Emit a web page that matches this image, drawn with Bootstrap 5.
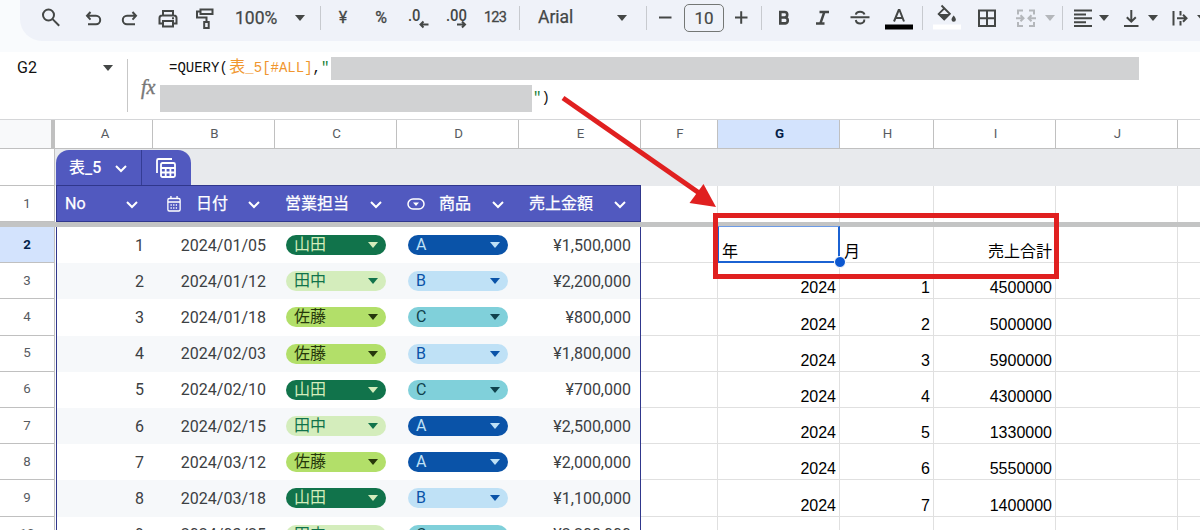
<!DOCTYPE html>
<html lang="ja">
<head>
<meta charset="utf-8">
<title>QUERY</title>
<link rel="stylesheet" href="https://cdn.jsdelivr.net/npm/bootstrap@5.3.0/dist/css/bootstrap.min.css">
<style>
body{width:1200px;height:530px;overflow:hidden;background:#fff;font-family:Roboto,"Noto Sans CJK JP",sans-serif;font-size:16px;line-height:20px;color:#3c4043}
.topzone{height:52px;background:#f9fbfd}
.tools{height:41px;margin-left:20px;padding-bottom:6px;background:#eff2f9;border-radius:0 0 0 22px;color:#444746;font-weight:400;white-space:nowrap;overflow:hidden}
.tools>*{flex:none}
svg{display:block;overflow:visible}
.ic{width:24px;height:24px;fill:none;stroke:#444746;stroke-width:2}
.wide{width:28px}
.car{width:0;height:0;border:5px solid transparent;border-top:6px solid #444746;border-bottom:0}
.car.off{border-top-color:#b4b7bb}
.vr1{width:1px;height:24px;background:#c7cacf}
.m5{margin-left:5px}.m7{margin-left:7px}.m9{margin-left:9px}.m10{margin-left:10px}.m13{margin-left:13px}.m14{margin-left:14px}.m15{margin-left:15px}.m18{margin-left:18px}.m39{margin-left:39px}
.t17{font-size:17.5px;-webkit-text-stroke:.25px}
.sym{width:24px;text-align:center;-webkit-text-stroke:.3px}
.n123{width:26px;margin-left:11px;font-size:14.5px;letter-spacing:-.8px;text-align:center;-webkit-text-stroke:.3px}
.size{width:40px;height:28px;border:1px solid #747775;border-radius:5px;line-height:26px;font-size:17px;-webkit-text-stroke:.2px}
.fbar{height:67px;color:#111}
.namebox{width:128px;height:53px;margin-top:7px;padding:0 14px 0 17px;border-right:1px solid #c7c7c7}
.fx{width:32px;padding:24px 0 0 13px;font:italic 20px "Liberation Serif",serif;color:#777;-webkit-text-stroke:.4px}
.code{font:14px/22px "Liberation Mono","Noto Sans CJK JP",monospace;white-space:nowrap}
.code .jp{font-size:16px;line-height:20px}
.orange{color:#f0962e}.green{color:#188038}
.mask{background:#d1d2d3}
.gridrow{display:grid;grid-template-columns:56px 97px 122px 122px 122px 122px 77px 122px 94px 122px 122px 22px}
.heads{height:30px;border-top:1px solid #d5d6d8;border-bottom:1px solid #c0c0c0;font-size:13.3px;color:#575b5f;text-align:center;line-height:28px}
.heads>div{border-right:1px solid #c0c0c0;padding-left:2px}
.heads>.corner{background:#f8f9fa;border-right:4px solid #c0c0c0;width:55px}
.on{background:#d3e3fd;color:#041e49!important;font-weight:700}
.rh{width:55px;border-right:1px solid #c0c0c0;border-bottom:1px solid #c0c0c0;font-size:13.3px;color:#575b5f}
.tabrow{height:37px;background:#e8eaed}
.tabrow .rh{background:#fff;margin-right:1px}
.tabs{width:135px;height:36px;margin-top:1px;background:#5159bf;border-radius:13px 13px 0 0;color:#fff;font-weight:500}
.tabs .nm{width:86px;padding-left:13px;border-right:1px solid #343c94;height:36px}
.r1{height:36px}
.thead1{grid-column:2/7;display:grid;grid-template-columns:97px 122px 122px 122px 122px;background:#5159bf;border:1px solid #30378c;color:#fff;margin-top:-1px;-webkit-text-stroke:.25px}
.thead1>div{padding:0 16px 0 9px;padding-top:1px}
.thead1>div:first-child{padding-left:8px}
.freeze{height:5px;background:#c3c4c4}
.chev{width:12px;height:7px;fill:none;stroke:#fff;stroke-width:2}
.drow{height:36.2px}
.drow>.c{border-bottom:1px solid #e0e0e0;border-right:1px solid #e0e0e0;font:16px/20px "Liberation Sans","Noto Sans CJK JP",sans-serif;color:#000;padding:0 3px 0 4px}
.r1>.c{border-right:1px solid #e0e0e0}
.tb{padding:1px 9px 0 0}
.alt{background:#f6f8fa}
.edgeL{border-left:1px solid #30378c}
.edgeR{border-right:1px solid #30378c}
.chip{width:100px;height:20px;border-radius:10px;padding:0 8px}
.chip::after{content:"";border:5.5px solid transparent;border-top:6px solid;border-bottom:0}
.chip.dg{background:#11734b;color:#d4edbc}.chip.lg{background:#d4edbc;color:#11734b}.chip.yg{background:#b2df69;color:#26370b}
.chip.db{background:#0a53a8;color:#bfe1f6}.chip.lb{background:#bfe1f6;color:#0a53a8}.chip.tl{background:#80d0da;color:#10424d}
.pick{left:717px;top:226px;width:123px;height:37px;border:2px solid #1b62d2;border-top:1px solid #6d9be5}
.dot{left:834px;top:256px;width:12px;height:12px;border-radius:50%;background:#0b57d0;border:1px solid #fff}
.mark1{left:713px;top:213px;width:346px;height:66px;border:5px solid #e02020}
</style>
</head>
<body class="position-relative">
<div class="topzone">
 <div class="tools d-flex align-items-center">
  <svg class="ic" style="margin-left:19px" viewBox="0 0 24 24"><circle cx="9.500" cy="9" r="5.500"/><path d="M13.600 13.100l6.600 6.600"/></svg>
  <svg class="ic m18" viewBox="0 0 24 24"><path d="M9.500 5L6 8.800l3.500 3.800M6.200 8.800H15a4.200 4.200 0 010 8.400H7" transform="translate(0 1)"/></svg>
  <svg class="ic m13" viewBox="0 0 24 24"><path d="M14.500 5L18 8.800l-3.500 3.800M17.800 8.800H9a4.200 4.200 0 000 8.400h8" transform="translate(0 1)"/></svg>
  <svg class="ic m14" viewBox="0 0 24 24"><path d="M7 9V5h10v4M7 17.500H3.500V12A2.500 2.500 0 016 9.500h12a2.500 2.500 0 012.500 2.500v5.500H17M7 15h10v5.500H7z"/><path d="M16 12.300h2"/></svg>
  <svg class="ic m13" viewBox="0 0 24 24"><path d="M7.500 3.500h12V8h-12zM7.500 5.500H4v6h9.500v4M11.200 16h4.500v6h-4.500z"/></svg>
  <span class="m18 t17" style="width:46px">100%</span>
  <i class="car m14"></i><i class="vr1 m15"></i>
  <span class="m10 sym">¥</span>
  <span class="m14 sym">%</span>
  <svg class="ic m13" viewBox="0 0 24 24"><text x="2" y="15" font-size="16" fill="#444746" stroke="none" font-weight="500" textLength="12.500" lengthAdjust="spacingAndGlyphs">.0</text><path d="M22.500 18.500h-8m3-3l-3 3 3 3"/></svg>
  <svg class="ic wide m13" viewBox="0 0 28 24"><text x="3" y="15" font-size="16" fill="#444746" stroke="none" font-weight="500" textLength="21" lengthAdjust="spacingAndGlyphs">.00</text><path d="M14 18.500h8m-3-3l3 3-3 3"/></svg>
  <span class="n123">123</span>
  <i class="vr1" style="margin-left:11px"></i>
  <span class="m18 t17" style="width:40px;margin-top:-2px">Arial</span>
  <i class="car m39"></i><i class="vr1" style="margin-left:19px"></i>
  <svg class="ic" style="margin-left:6px" viewBox="0 0 24 24"><path d="M6 11.500h12.500"/></svg>
  <div class="size m7 text-center">10</div>
  <svg class="ic m5" viewBox="0 0 24 24"><path d="M6 11.500h12.500M12.200 5.300v12.500"/></svg>
  <i class="vr1" style="margin-left:8px"></i>
  <svg class="ic m10" viewBox="0 0 24 24"><path stroke-width="2.600" d="M8.300 6h4.200a2.700 2.700 0 010 5.500H8.300zM8.300 11.500h5a3 3 0 010 5.900h-5z"/></svg>
  <svg class="ic m14" viewBox="0 0 24 24"><path stroke-width="2.500" d="M9.500 6H19M6 17.400h8.500M14.300 6.200l-3.800 11"/></svg>
  <svg class="ic m14" viewBox="0 0 24 24"><path d="M2.500 11.200h19M16.500 8.600C15.500 4.800 8.500 4.800 7.800 8.600M7.800 14c.8 5 8.900 4.500 8.500-.5"/></svg>
  <svg class="ic wide m13" viewBox="0 0 28 24"><path d="M9 15.500L13.700 4h.8L19 15.500M10.600 12h7"/><path fill="#000" stroke="none" d="M0 18.500h28v5H0z"/></svg>
  <i class="vr1 m9"></i>
  <svg class="ic wide m10" viewBox="0 0 28 24"><path stroke-width="1.900" d="M8.500 -.5l8.300 8.300-5.600 5.600-5.500-5.500 5.600-5.600"/><path fill="#444746" stroke="none" d="M5 8h12.500l-6.300 6.300zM20.700 9.500s-2.200 2.500-2.200 4a2.200 2.200 0 004.400 0c0-1.500-2.200-4-2.200-4z"/><path fill="#fff" stroke="none" d="M0 18.500h28v5H0z"/></svg>
  <svg class="ic m14" viewBox="0 0 24 24"><path d="M4 4.500h16v15.500H4zM12 4.500V20M4 12.200h16"/></svg>
  <svg class="ic m15" viewBox="0 0 24 24" style="stroke:#b4b7bb"><path d="M9 4.500H4v4M9 20H4v-4M15 4.500h5v4M15 20h5v-4M2 12.200h7.500m-3-3l3 3-3 3M22 12.200h-7.500m3-3l-3 3 3 3"/></svg>
  <i class="car off m7"></i><i class="vr1 m7"></i>
  <svg class="ic" style="margin-left:8px" viewBox="0 0 24 24"><path d="M3 4.500h18M3 8.500h12M3 12.300h18M3 16.200h12M3 20h18"/></svg>
  <i class="car" style="margin-left:4px"></i>
  <svg class="ic m10" viewBox="0 0 24 24"><path d="M12.300 4v11.500m-4.500-4.300l4.500 4.500 4.500-4.500M5 20h14.500"/></svg>
  <i class="car m5"></i>
  <svg class="ic m10" viewBox="0 0 24 24"><path d="M5.500 5v14.500M9 12.200h9.500m-3.500-3.500l3.500 3.500-3.500 3.500M12.500 5v4.500M12.500 15v4.500"/></svg>
  <i class="car m5"></i>
 </div>
</div>

<div class="fbar d-flex">
 <div class="namebox d-flex justify-content-between"><span style="margin-top:-1px">G2</span><i class="car" style="margin-top:6px"></i></div>
 <div class="fx">fx</div>
 <div class="code">
  <div class="d-flex" style="padding:5px 0 0 9px;height:33px"><span>=QUERY(</span><span class="orange" style="margin-left:1.500px"><span class="jp">表</span>_5[#ALL]</span><span>,<span class="green">"</span></span><div class="mask" style="width:808px;height:23px;margin-left:1.500px"></div></div>
  <div class="d-flex"><div class="mask" style="width:372px;height:27px"></div><span style="padding:2px 0 0 1px"><span class="green">"</span>)</span></div>
 </div>
</div>

<div class="gridrow heads"><div class="corner"></div><div>A</div><div>B</div><div>C</div><div>D</div><div>E</div><div>F</div><div class="on">G</div><div>H</div><div>I</div><div>J</div><span></span></div>

<div class="d-flex tabrow">
 <div class="rh"></div>
 <div class="tabs d-flex align-items-center">
  <div class="nm d-flex align-items-center"><span>表_5</span><svg class="chev" style="margin-left:14px" viewBox="0 0 12 7"><path d="M1 1l5 5 5-5"/></svg></div>
  <svg width="22" height="22" style="margin-left:13px" viewBox="0 0 22 22" fill="none" stroke="#fff" stroke-width="1.800"><path d="M2 16V3.500A1.500 1.500 0 013.500 2H17"/><rect x="6" y="6" width="14" height="14" rx="1.500"/><path d="M6 11h14M6 15.500h14M10.700 11v9M15.400 11v9"/></svg>
 </div>
</div>
<div class="gridrow r1">
 <div class="rh d-flex align-items-center justify-content-center">1</div>
 <div class="thead1 align-items-center">
  <div class="d-flex align-items-center justify-content-between">No<svg class="chev" viewBox="0 0 12 7"><path d="M1 1l5 5 5-5"/></svg></div>
  <div class="d-flex align-items-center"><svg class="ms-1" width="14" height="16" style="margin-right:15px" viewBox="0 0 16 16" preserveAspectRatio="none" fill="none" stroke="#fff" stroke-width="1.500"><rect x="1" y="2.500" width="14" height="12.500" rx="1.500"/><path d="M4.500 0v3M11.500 0v3M1 6h14"/><path stroke-dasharray="1.500 1.500" d="M4 9h9M4 12h9"/></svg><span>日付</span><svg class="chev ms-auto" viewBox="0 0 12 7"><path d="M1 1l5 5 5-5"/></svg></div>
  <div class="d-flex align-items-center justify-content-between">営業担当<svg class="chev" viewBox="0 0 12 7"><path d="M1 1l5 5 5-5"/></svg></div>
  <div class="d-flex align-items-center"><svg width="18" height="12" viewBox="0 0 18 12" fill="none" stroke="#fff" stroke-width="1.500"><rect x="1" y="1" width="16" height="10" rx="5"/><path fill="#fff" stroke="none" d="M6 4.500h6l-3 3.500z"/></svg><span style="margin-left:14px">商品</span><svg class="chev ms-auto" viewBox="0 0 12 7"><path d="M1 1l5 5 5-5"/></svg></div>
  <div class="d-flex align-items-center justify-content-between">売上金額<svg class="chev" viewBox="0 0 12 7"><path d="M1 1l5 5 5-5"/></svg></div>
 </div>
 <div class="c"></div><div class="c"></div><div class="c"></div><div class="c"></div><div class="c"></div>
</div>
<div class="freeze"></div>
<div id="rows"></div>

<div class="position-absolute pick"></div>
<div class="position-absolute dot"></div>
<div class="position-absolute mark1"></div>
<svg class="position-absolute top-0 start-0 pe-none" width="1200" height="530"><path d="M563 98L702 195" stroke="#e02020" stroke-width="5"/><path d="M716 207l-12.500-23-14 19z" fill="#e02020"/></svg>

<script src="https://cdn.jsdelivr.net/npm/bootstrap@5.3.0/dist/js/bootstrap.bundle.min.js"></script>
<script>
const people={山田:'dg',田中:'lg',佐藤:'yg'}, goods={A:'db',B:'lb',C:'tl'};
const sales=[['01/05','山田','A','1,500,000'],['01/12','田中','B','2,200,000'],['01/18','佐藤','C','800,000'],['02/03','佐藤','B','1,800,000'],['02/10','山田','C','700,000'],['02/15','田中','A','2,500,000'],['03/12','佐藤','A','2,000,000'],['03/18','山田','B','1,100,000'],['03/25','田中','C','2,200,000']];
const totals=[['年','月','売上合計'],...[4500000,5000000,5900000,4300000,1330000,5550000,1400000].map((v,i)=>[2024,i+1,v]),['','','']];
const chip=(t,k,a)=>`<div class="d-flex align-items-center justify-content-center${a}"><div class="chip ${k} d-flex align-items-center justify-content-between">${t}</div></div>`;
const cell=(t,left)=>`<div class="c d-flex align-items-end justify-content-${left?'start':'end'}">${t}</div>`;
document.getElementById('rows').innerHTML=sales.map((s,i)=>{
 const a=i%2?' alt':'', t=totals[i], base='tb d-flex align-items-center justify-content-end'+a;
 return `<div class="gridrow drow"><div class="rh d-flex align-items-center justify-content-center${i?'':' on'}">${i+2}</div>
 <div class="${base} edgeL">${i+1}</div><div class="${base}">2024/${s[0]}</div>
 ${chip(s[1],people[s[1]],a)}${chip(s[2],goods[s[2]],a)}
 <div class="${base} edgeR">¥${s[3]}</div>${cell('')}${cell(t[0],!i)}${cell(t[1],!i)}${cell(t[2])}${cell('')}<div class="c" style="border-right:0"></div></div>`}).join('');
</script>
</body>
</html>
